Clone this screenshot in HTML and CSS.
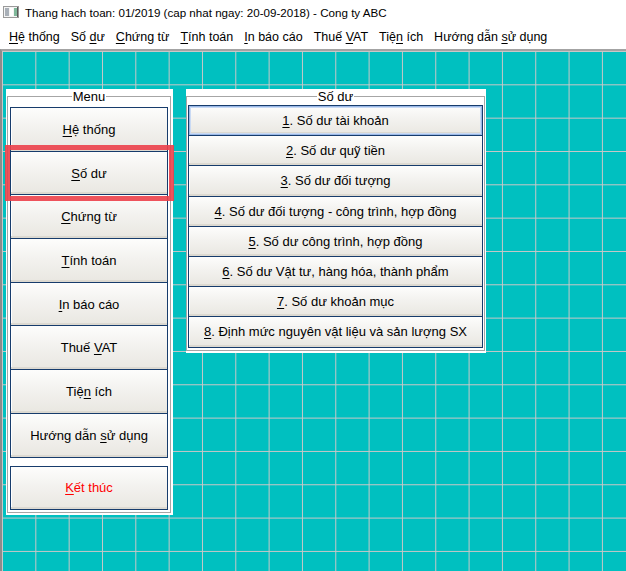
FILE: index.html
```html
<!DOCTYPE html>
<html lang="vi">
<head>
<meta charset="utf-8">
<title>Thang hach toan</title>
<link rel="stylesheet" href="styles.css">
</head>
<body>
<div class="window">
  <div class="titlebar">
    <svg class="app-icon" width="16" height="12" viewBox="0 0 16 12">
      <rect x="0.5" y="0.5" width="15" height="11" fill="#f4f4f4" stroke="#9a9a9a"/>
      <rect x="2" y="2" width="4" height="8" fill="#a9b0b8"/>
      <rect x="7" y="2" width="3" height="8" fill="#ffffff"/>
      <rect x="11" y="2" width="3" height="8" fill="#7fb89a"/>
      <rect x="14" y="1" width="1" height="10" fill="#5a5a5a"/>
    </svg>
    <span class="title-text">Thang hach toan: 01/2019 (cap nhat ngay: 20-09-2018) - Cong ty ABC</span>
  </div>
  <div class="menubar">
    <span class="menu-item"><u>H</u>ệ thống</span>
    <span class="menu-item">Số <u>d</u>ư</span>
    <span class="menu-item"><u>C</u>hứng từ</span>
    <span class="menu-item"><u>T</u>ính toán</span>
    <span class="menu-item"><u>I</u>n báo cáo</span>
    <span class="menu-item">Thuế <u>V</u>AT</span>
    <span class="menu-item">Tiệ<u>n</u> ích</span>
    <span class="menu-item">Hướng dẫn <u>s</u>ử dụng</span>
  </div>
  <div class="workspace">
    <div class="panel panel-menu">
      <fieldset class="group">
        <legend class="group-title">Menu</legend>
        <div class="btn-stack">
          <div class="btn btn-tall"><span><u>H</u>ệ thống</span></div>
          <div class="btn btn-tall"><span><u>S</u>ố dư</span></div>
          <div class="btn btn-tall"><span><u>C</u>hứng từ</span></div>
          <div class="btn btn-tall"><span><u>T</u>ính toán</span></div>
          <div class="btn btn-tall"><span><u>I</u>n báo cáo</span></div>
          <div class="btn btn-tall"><span>Thuế <u>V</u>AT</span></div>
          <div class="btn btn-tall"><span>Tiệ<u>n</u> ích</span></div>
          <div class="btn btn-tall"><span>Hướng dẫn <u>s</u>ử dụng</span></div>
        </div>
        <div class="btn btn-tall btn-exit"><span><u>K</u>ết thúc</span></div>
      </fieldset>
      <div class="highlight"></div>
    </div>
    <div class="panel panel-sodu">
      <fieldset class="group">
        <legend class="group-title">Số dư</legend>
        <div class="btn-stack">
          <div class="btn btn-row btn-focus"><span><u>1</u>. Số dư tài khoản</span></div>
          <div class="btn btn-row"><span><u>2</u>. Số dư quỹ tiền</span></div>
          <div class="btn btn-row"><span><u>3</u>. Số dư đối tượng</span></div>
          <div class="btn btn-row"><span><u>4</u>. Số dư đối tượng - công trình, hợp đồng</span></div>
          <div class="btn btn-row"><span><u>5</u>. Số dư công trình, hợp đồng</span></div>
          <div class="btn btn-row"><span><u>6</u>. Số dư Vật tư, hàng hóa, thành phẩm</span></div>
          <div class="btn btn-row"><span><u>7</u>. Số dư khoản mục</span></div>
          <div class="btn btn-row"><span><u>8</u>. Định mức nguyên vật liệu và sản lượng SX</span></div>
        </div>
      </fieldset>
    </div>
  </div>
</div>
</body>
</html>
```

FILE: styles.css
```css
html, body {
  margin: 0;
  padding: 0;
  background: #ffffff;
}

body {
  font-family: "Liberation Sans", Arial, sans-serif;
  color: #000000;
  width: 626px;
  height: 571px;
  overflow: hidden;
}

.window {
  display: flex;
  flex-direction: column;
  height: 571px;
}

.titlebar {
  height: 24px;
  display: flex;
  align-items: center;
  padding-left: 3px;
  gap: 6px;
  font-size: 11.6px;
  background: #ffffff;
}

.app-icon {
  display: block;
  margin-top: -1px;
}

.title-text {
  white-space: nowrap;
}

.menubar {
  height: 25px;
  display: flex;
  align-items: center;
  padding-left: 9px;
  gap: 11px;
  font-size: 12.5px;
  background: #ffffff;
}

.menu-item {
  white-space: nowrap;
}

.menu-item u,
.btn u {
  text-underline-offset: 2px;
}

.workspace {
  flex: 1;
  display: flex;
  align-items: flex-start;
  gap: 13px;
  padding: 38px 0 0 4px;
  border-top: 2px solid #a3a3a3;
  border-left: 2px solid #8c8c8c;
  background-color: #00c0c0;
  background-image:
    linear-gradient(to right, #cbc7c7 1px, transparent 1px),
    linear-gradient(to bottom, #cbc7c7 1px, transparent 1px);
  background-size: 33.333px 33.333px;
  background-position: 0 0;
}

.panel {
  position: relative;
  background: #ffffff;
}

.panel-menu {
  width: 164px;
  padding: 0 2px 2px 1px;
}

.panel-sodu {
  width: 299px;
  padding: 0 1px 2px 0;
}

.group {
  margin: 0;
  border: 1px solid #a6a6a6;
  min-width: 0;
}

.panel-menu .group {
  padding: 3px 2px 2px 2px;
}

.panel-sodu .group {
  padding: 1px 1px 2px 1px;
}

.group-title {
  margin: 0 auto;
  padding: 0 1px;
  font-size: 13px;
  line-height: 15px;
}

.btn-stack {
  display: flex;
  flex-direction: column;
}

.btn {
  box-sizing: border-box;
  display: flex;
  align-items: center;
  justify-content: center;
  border: 1px solid #173c6c;
  background: linear-gradient(to bottom, #fdfdfc 0%, #f3f2ef 45%, #e9e7e1 100%);
  box-shadow: inset 0 -2px 0 #dcd9d1, inset 1px 0 0 #ffffff;
  font-size: 13px;
  white-space: nowrap;
}

.btn-stack .btn + .btn {
  margin-top: -1px;
}

.btn-tall {
  height: 44.7px;
}

.btn-row {
  height: 31.2px;
}

.btn-focus {
  box-shadow: inset 0 0 0 1px #9ab8e6, inset 0 0 0 2px #c9daf4, inset 0 -3px 0 #dcd9d1;
}

.btn-exit {
  margin-top: 8px;
  color: #ff0000;
}

.highlight {
  position: absolute;
  left: -1px;
  top: 56px;
  width: 169px;
  height: 56px;
  box-sizing: border-box;
  border: 5px solid rgba(236, 64, 74, 0.9);
  pointer-events: none;
}
```
